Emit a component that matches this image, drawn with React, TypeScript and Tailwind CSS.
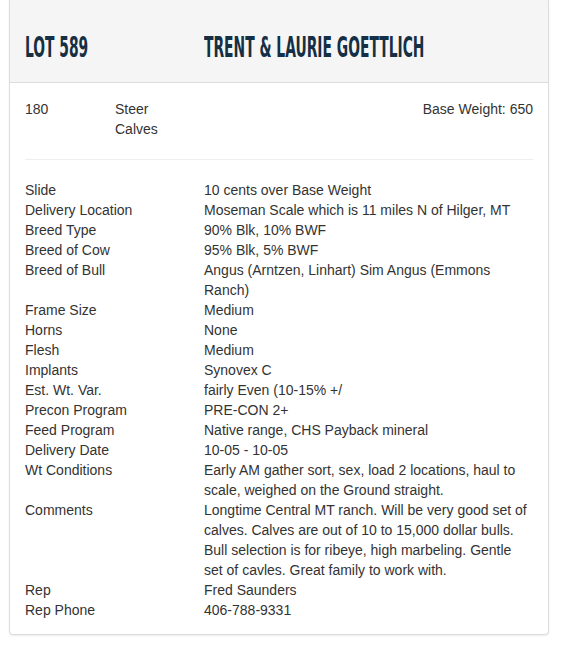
const details: [string, string][] = [
  ['Slide', '10 cents over Base Weight'],
  ['Delivery Location', 'Moseman Scale which is 11 miles N of Hilger, MT'],
  ['Breed Type', '90% Blk, 10% BWF'],
  ['Breed of Cow', '95% Blk, 5% BWF'],
  ['Breed of Bull', 'Angus (Arntzen, Linhart) Sim Angus (Emmons Ranch)'],
  ['Frame Size', 'Medium'],
  ['Horns', 'None'],
  ['Flesh', 'Medium'],
  ['Implants', 'Synovex C'],
  ['Est. Wt. Var.', 'fairly Even (10-15% +/'],
  ['Precon Program', 'PRE-CON 2+'],
  ['Feed Program', 'Native range, CHS Payback mineral'],
  ['Delivery Date', '10-05 - 10-05'],
  ['Wt Conditions', 'Early AM gather sort, sex, load 2 locations, haul to scale, weighed on the Ground straight.'],
  [
    'Comments',
    'Longtime Central MT ranch. Will be very good set of calves. Calves are out of 10 to 15,000 dollar bulls. Bull selection is for ribeye, high marbeling. Gentle set of cavles. Great family to work with.',
  ],
  ['Rep', 'Fred Saunders'],
  ['Rep Phone', '406-788-9331'],
];

export default function App() {
  return (
    <div className="w-[565px] h-[651px] bg-white pl-[9px] pr-4 [font-family:'Liberation_Sans',Arial,sans-serif] text-[14px] leading-5 text-[#333]">
      <div className="rounded-b border border-t-0 border-[#dddddd] shadow-[0_1px_2px_rgba(0,0,0,0.08)]">
        <div className="grid h-[83px] grid-cols-[179px_1fr] items-center overflow-hidden border-b border-[#dddddd] bg-[#f5f5f5] px-[15px] pt-[14px] text-[#152f44] [font-family:'Liberation_Sans_Narrow','DejaVu_Sans_Condensed',sans-serif]">
          <h2 className="text-[28px] font-bold leading-none">
            <span className="inline-block origin-left scale-x-[0.55] whitespace-nowrap">LOT 589</span>
          </h2>
          <h2 className="min-w-0 text-[28px] font-bold leading-none">
            <span className="inline-block origin-left scale-x-[0.55] whitespace-nowrap">TRENT &amp; LAURIE GOETTLICH</span>
          </h2>
        </div>
        <div className="px-[15px] pt-[16px] pb-[14px]">
          <div className="flex border-b border-[#eeeeee] pb-5">
            <div className="w-[90px]">180</div>
            <div className="w-[60px]">Steer Calves</div>
            <div className="ml-auto">Base Weight: 650</div>
          </div>
          <div className="grid grid-cols-[179px_1fr] pt-5">
            {details.map(([k, v]) => (
              <div key={k} className="contents">
                <div>{k}</div>
                <div>{v}</div>
              </div>
            ))}
          </div>
        </div>
      </div>
    </div>
  );
}
